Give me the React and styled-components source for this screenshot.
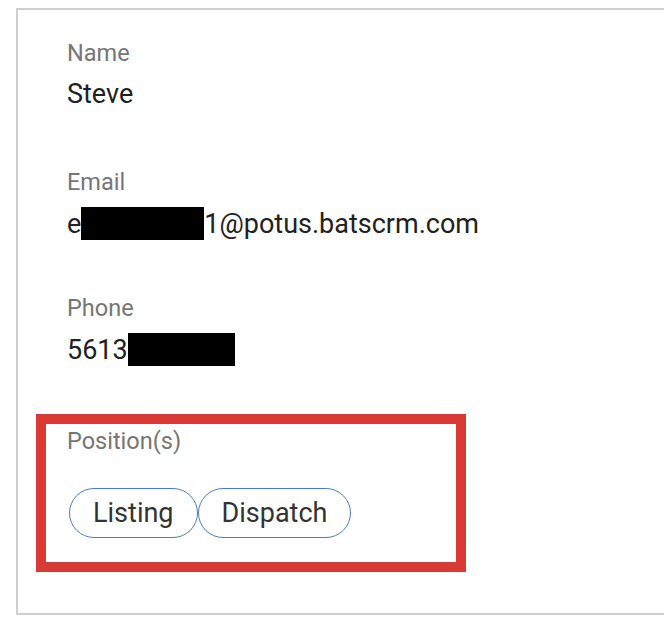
import React from "react";
import styled, { createGlobalStyle } from "styled-components";

const Global = createGlobalStyle`
  html, body { margin: 0; padding: 0; background: #ffffff; }
  body { font-family: Roboto, "Noto Sans", Arial, sans-serif; overflow: hidden; }
`;

const Page = styled.div`
  width: 664px;
  height: 632px;
  padding: 8px 0 0 16px;
  box-sizing: border-box;
  overflow: hidden;
`;

const Card = styled.div`
  width: 700px;
  height: 607px;
  box-sizing: border-box;
  border: 2px solid #cfcfcf;
  padding: 29px 0 0 49px;
  display: flex;
  flex-direction: column;
`;

const Field = styled.div`
  display: flex;
  flex-direction: column;
  margin-bottom: ${(p) => p.$mb || 0}px;
`;

const Label = styled.div`
  font-size: 23.5px;
  line-height: 28px;
  color: #767676;
  white-space: nowrap;
`;

const Value = styled.div`
  font-size: 27px;
  line-height: 32px;
  color: #212121;
  margin-top: 11px;
  display: flex;
  align-items: center;
  white-space: nowrap;
`;

const Redact = styled.span`
  display: inline-block;
  width: ${(p) => p.$w}px;
  height: 33px;
  background: #000;
`;

const Highlight = styled.div`
  margin-left: -31px;
  width: 430px;
  height: 158px;
  box-sizing: border-box;
  border: 10px solid #d93a36;
  padding: 3px 0 0 21px;
  display: flex;
  flex-direction: column;
`;

const Chips = styled.div`
  display: flex;
  margin-top: 33px;
  margin-left: 2px;
`;

const Chip = styled.span`
  display: inline-flex;
  align-items: center;
  justify-content: center;
  height: 50px;
  box-sizing: border-box;
  padding: 0 23px;
  border: 1.5px solid #4a7cc0;
  border-radius: 25px;
  font-size: 27px;
  color: #333333;
`;

export default function App() {
  return (
    <>
      <Global />
      <Page>
        <Card>
          <Field $mb={58}>
            <Label>Name</Label>
            <Value>Steve</Value>
          </Field>
          <Field $mb={54}>
            <Label>Email</Label>
            <Value>
              e<Redact $w={123} />1@potus.batscrm.com
            </Value>
          </Field>
          <Field $mb={48}>
            <Label>Phone</Label>
            <Value>
              5613<Redact $w={107} />
            </Value>
          </Field>
          <Highlight>
            <Label>Position(s)</Label>
            <Chips>
              <Chip>Listing</Chip>
              <Chip>Dispatch</Chip>
            </Chips>
          </Highlight>
        </Card>
      </Page>
    </>
  );
}
